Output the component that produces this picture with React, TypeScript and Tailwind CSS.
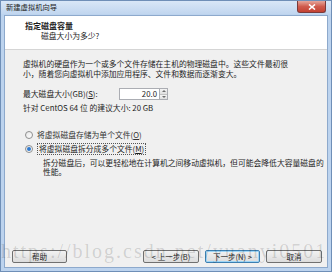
import React from 'react';

const cjk = { fontFamily: '"Noto Sans CJK SC", "Noto Sans", sans-serif' };

const Radio: React.FC<{ checked?: boolean }> = ({ checked }) => (
  <span className="w-[8px] h-[8px] rounded-full border border-[#8e8f8f] bg-gradient-to-br from-[#e6e6e6] to-white flex items-center justify-center shrink-0">
    {checked && <span className="w-[4px] h-[4px] rounded-full bg-[#2f7ad0]" />}
  </span>
);

const Btn: React.FC<{ label: string; focused?: boolean; className?: string }> = ({ label, focused, className }) => (
  <button
    className={`h-[13px] rounded-[2px] border text-[7.5px] leading-none flex items-center justify-center bg-gradient-to-b from-[#f2f2f2] to-[#dcdcdc] text-[#1e1e1e] ${
      focused ? 'border-[#3c7fb1] shadow-[inset_0_0_0_1px_#9fd5f5]' : 'border-[#707070]'
    } ${className ?? ''}`}
  >
    {label}
  </button>
);

export default function App() {
  return (
    <div
      className="w-[332px] h-[272px] relative overflow-hidden bg-[#bcd3ee] flex flex-col border border-[#6f8fb7] text-[#1e1e1e]"
      style={cjk}
    >
      {/* Title bar */}
      <div className="h-[13px] flex items-center justify-between pl-[5px] pr-[5px] bg-gradient-to-b from-[#d9e7f7] to-[#c1d6ef]">
        <span className="text-[7.3px] leading-none text-[#222]">新建虚拟机向导</span>
        <div className="self-start w-[29px] h-[12px] rounded-b-[3px] border border-t-0 border-[#7a3a3a] bg-gradient-to-b from-[#e4a69c] via-[#cf5b4d] to-[#c34131] flex items-center justify-center">
          <svg width="8" height="6" viewBox="0 0 8 6">
            <path d="M1 0.5 L7 5.5 M7 0.5 L1 5.5" stroke="white" strokeWidth="1.6" />
          </svg>
        </div>
      </div>

      {/* Client area */}
      <div className="flex-1 mx-[3px] mt-[1px] mb-[3px] flex flex-col border border-[#8da9cc] bg-[#f0f0f0]">
        {/* Header */}
        <div className="h-[34px] bg-white border-b border-[#d5d5d5] pl-[20px] pt-[5px]">
          <div className="text-[8px] leading-[10px] font-bold">指定磁盘容量</div>
          <div className="text-[7.8px] leading-[10px] pl-[16px]">磁盘大小为多少?</div>
        </div>

        {/* Body */}
        <div className="flex-1 flex flex-col pl-[18px] pr-[4px] pt-[9px] text-[7.8px]">
          <p className="leading-[10px] whitespace-nowrap">
            虚拟机的硬盘作为一个或多个文件存储在主机的物理磁盘中。这些文件最初很
            <br />
            小，随着您向虚拟机中添加应用程序、文件和数据而逐渐变大。
          </p>

          <div className="flex items-center mt-[9px] h-[12px]">
            <span className="w-[96px] leading-none">
              最大磁盘大小(GB)(<span className="underline">S</span>):
            </span>
            <div className="w-[41px] h-[12px] bg-white border border-[#abadb3] flex items-center justify-end pr-[2px] text-[7.8px] leading-none">
              20.0
            </div>
            <div className="w-[8px] h-[12px] flex flex-col border border-l-0 border-[#abadb3]">
              <div className="flex-1 bg-gradient-to-b from-[#f4f4f4] to-[#e0e0e0] border-b border-[#c3c3c3] flex items-center justify-center">
                <svg width="4" height="2" viewBox="0 0 4 2"><path d="M0 2 L2 0 L4 2Z" fill="#6d6d6d" /></svg>
              </div>
              <div className="flex-1 bg-gradient-to-b from-[#f4f4f4] to-[#e0e0e0] flex items-center justify-center">
                <svg width="4" height="2" viewBox="0 0 4 2"><path d="M0 0 L2 2 L4 0Z" fill="#6d6d6d" /></svg>
              </div>
            </div>
          </div>

          <div className="mt-[3px] leading-[10px]">针对 CentOS 64 位 的建议大小: 20 GB</div>

          <div className="mt-[17px] flex items-center gap-[4px] h-[10px] pl-[2px]">
            <Radio />
            <span className="leading-none text-[#333]">将虚拟磁盘存储为单个文件(<span className="underline">O</span>)</span>
          </div>
          <div className="mt-[4px] flex items-center gap-[4px] h-[10px] pl-[2px]">
            <Radio checked />
            <span className="leading-none border border-dotted border-[#555] px-[1px] py-[1px]">
              将虚拟磁盘拆分成多个文件(<span className="underline">M</span>)
            </span>
          </div>
          <p className="pl-[20px] mt-[4px] leading-[9px] whitespace-nowrap">
            拆分磁盘后，可以更轻松地在计算机之间移动虚拟机，但可能会降低大容量磁盘的
            <br />
            性能。
          </p>

          {/* Buttons */}
          <div className="mt-auto mb-[4px] -ml-[11px] flex items-center pr-[1px]">
            <Btn label="帮助" className="w-[55px]" />
            <div className="flex-1" />
            <Btn label="< 上一步(B)" className="w-[56px]" />
            <Btn label="下一步(N) >" focused className="w-[55px] ml-[6px]" />
            <Btn label="取消" className="w-[56px] ml-[6px]" />
          </div>
        </div>
      </div>

      {/* Watermark */}
      <div
        className="absolute left-0 top-[240px] text-[20px] leading-none tracking-[2px] text-black/15 pointer-events-none whitespace-nowrap"
        style={{ fontFamily: '"Liberation Serif", serif' }}
      >
        https://blog.csdn.net/yuanyi0501
      </div>
    </div>
  );
}
